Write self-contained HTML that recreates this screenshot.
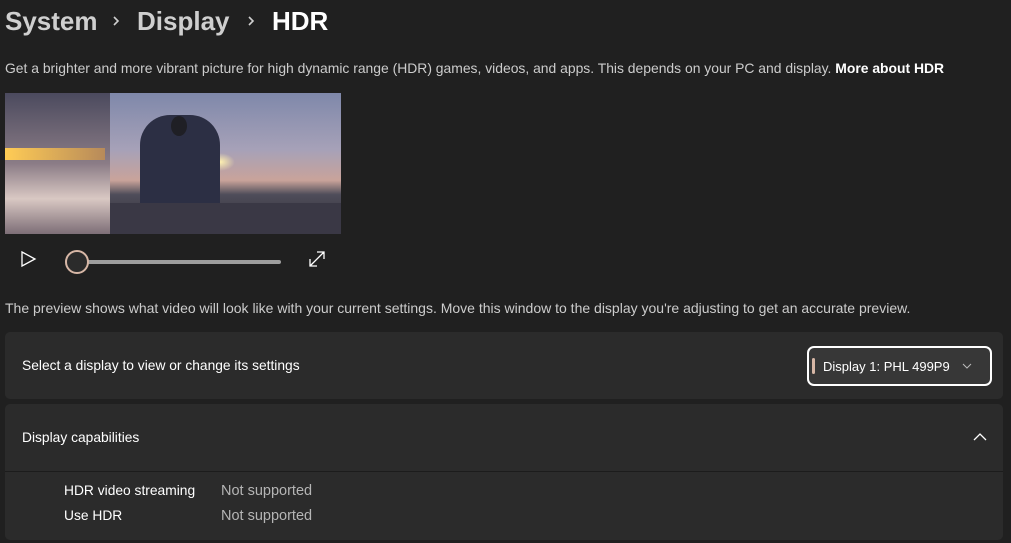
<!DOCTYPE html>
<html><head><meta charset="utf-8"><style>
*{margin:0;padding:0;box-sizing:border-box}
body{width:1011px;height:543px;background:#202020;font-family:"Liberation Sans",sans-serif;color:#fff;position:relative;overflow:hidden}
.t{position:absolute;white-space:nowrap}
.crumb{top:6px;font-size:26px;font-weight:bold;color:#cfcfcf}
.chev{position:absolute;top:14px}
.card{position:absolute;left:5px;width:998px;background:#2b2b2b;border-radius:5px}
.s{font-size:13.8px}
</style></head><body>
<div class="t crumb" style="left:5px">System</div>
<svg class="chev" style="left:111px" width="10" height="14"><path d="M3 3 L7 7 L3 11" fill="none" stroke="#cfcfcf" stroke-width="1.6"/></svg>
<div class="t crumb" style="left:137px">Display</div>
<svg class="chev" style="left:246px" width="10" height="14"><path d="M3 3 L7 7 L3 11" fill="none" stroke="#cfcfcf" stroke-width="1.6"/></svg>
<div class="t crumb" style="left:272px;color:#fff">HDR</div>
<div class="t" style="left:5px;top:60px;font-size:13.9px;color:#cccccc">Get a brighter and more vibrant picture for high dynamic range (HDR) games, videos, and apps. This depends on your PC and display. <b style="color:#fff">More about HDR</b></div>
<div style="position:absolute;left:5px;top:93px;width:336px;height:141px;overflow:hidden;background:linear-gradient(180deg,#7f88aa 0%,#a6a1b8 40%,#c9a39a 62%,#4f4d5a 72%,#2c2a34 100%)">
<div style="position:absolute;left:0;top:0;width:105px;height:141px;background:linear-gradient(180deg,#4b4a5e,#8b7c86 50%,#d9c8c3 75%,#7d6e77)"></div>
<div style="position:absolute;left:0;top:55px;width:100px;height:12px;background:linear-gradient(90deg,#ffcc55,#b78a5a)"></div>
<div style="position:absolute;left:200px;top:60px;width:30px;height:18px;border-radius:50%;background:radial-gradient(#fff1b0,rgba(255,180,80,0) 70%)"></div>
<div style="position:absolute;left:135px;top:22px;width:80px;height:119px;background:#2c2f44;border-radius:30px 30px 0 0"></div>
<div style="position:absolute;left:166px;top:23px;width:16px;height:20px;background:#1f1f25;border-radius:50%"></div>
<div style="position:absolute;left:105px;top:110px;width:231px;height:31px;background:#3a3845"></div>
</div>
<svg style="position:absolute;left:20px;top:250px" width="20" height="18"><path d="M2 2 L15 9 L2 16 Z" fill="none" stroke="#fff" stroke-width="1.3"/></svg>
<div style="position:absolute;left:75px;top:260px;width:206px;height:4px;background:#9e9e9e;border-radius:2px"></div>
<div style="position:absolute;left:65px;top:250px;width:24px;height:24px;border-radius:50%;background:#2b2b2b;border:2px solid #d7b7a6"></div>
<svg style="position:absolute;left:308px;top:250px" width="18" height="18"><path d="M2 16 L16 2 M9 2 H16 V9 M2 9 V16 H9" fill="none" stroke="#fff" stroke-width="1.3"/></svg>
<div class="t" style="left:5px;top:300px;font-size:14px;color:#cccccc">The preview shows what video will look like with your current settings. Move this window to the display you're adjusting to get an accurate preview.</div>
<div class="card" style="top:332px;height:67px"></div>
<div class="t s" style="left:22px;top:358px">Select a display to view or change its settings</div>
<div style="position:absolute;left:807px;top:346px;width:185px;height:40px;border:2px solid #fff;border-radius:7px;background:#373737"></div>
<div style="position:absolute;left:812px;top:358px;width:3px;height:16px;background:#d7b7a6;border-radius:2px"></div>
<div class="t" style="left:823px;top:359px;font-size:13px">Display 1: PHL 499P9</div>
<svg style="position:absolute;left:962px;top:362px" width="10" height="8"><path d="M1 2 L5 6 L9 2" fill="none" stroke="#bbb" stroke-width="1"/></svg>
<div class="card" style="top:404px;height:136px"></div>
<div style="position:absolute;left:5px;top:471px;width:998px;height:1px;background:#1c1c1c"></div>
<div class="t s" style="left:22px;top:430px">Display capabilities</div>
<svg style="position:absolute;left:973px;top:432px" width="14" height="10"><path d="M1 8 L7 2 L13 8" fill="none" stroke="#fff" stroke-width="1.3"/></svg>
<div class="t s" style="left:64px;top:483px">HDR video streaming</div>
<div class="t s" style="left:221px;top:483px;color:#b5b5b5;font-size:14.5px">Not supported</div>
<div class="t s" style="left:64px;top:508px">Use HDR</div>
<div class="t s" style="left:221px;top:508px;color:#b5b5b5;font-size:14.5px">Not supported</div>
</body></html>
